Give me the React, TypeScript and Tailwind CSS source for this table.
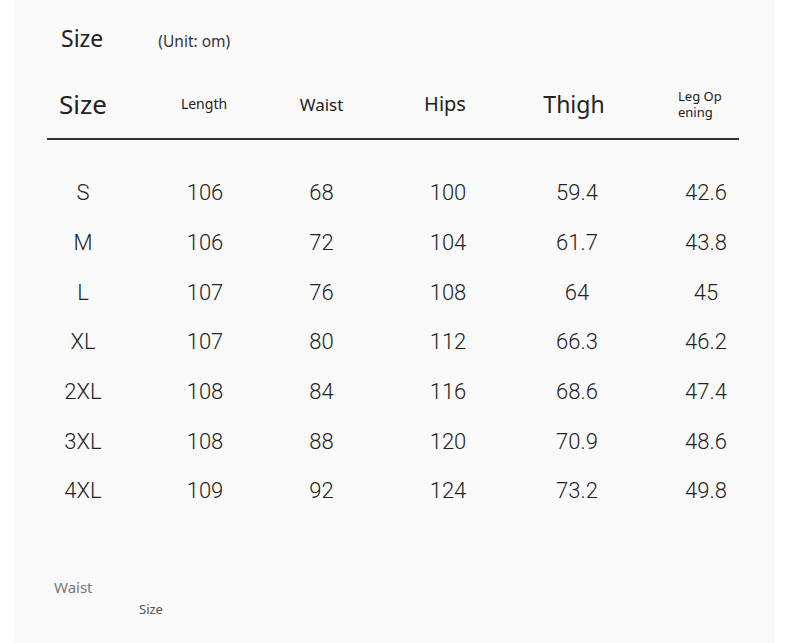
const headers = [
  { label: "Size", cls: "text-[26px]" },
  { label: "Length", cls: "text-[14px]" },
  { label: "Waist", cls: "text-[17px]" },
  { label: "Hips", cls: "text-[20px]" },
  { label: "Thigh", cls: "text-[23px]" },
];

const rows = [
  ["S", "106", "68", "100", "59.4", "42.6"],
  ["M", "106", "72", "104", "61.7", "43.8"],
  ["L", "107", "76", "108", "64", "45"],
  ["XL", "107", "80", "112", "66.3", "46.2"],
  ["2XL", "108", "84", "116", "68.6", "47.4"],
  ["3XL", "108", "88", "120", "70.9", "48.6"],
  ["4XL", "109", "92", "124", "73.2", "49.8"],
];

const grid =
  "grid grid-cols-[120px_122px_113px_134px_124px_134px] items-center text-center";

export default function App() {
  return (
    <div className="w-[790px] h-[643px] bg-white overflow-hidden">
      <div className="ml-[14px] w-[761px] h-[643px] pt-[27px] bg-[#fafafa] font-['Noto_Sans',sans-serif] text-[#222]">
        {/* Title */}
        <div className="flex items-baseline h-[30px] pl-[47px]">
          <span className="text-[23px] leading-none">Size</span>
          <span className="ml-[55px] text-[15.5px] text-[#333] leading-none">
            (Unit: om)
          </span>
        </div>

        {/* Header */}
        <div className={`${grid} h-[56px] mt-[19px] ml-[9px]`}>
          {headers.map((h) => (
            <div key={h.label} className={`${h.cls} leading-none`}>
              {h.label}
            </div>
          ))}
          <div className="flex flex-col text-[13px] leading-[16px] text-left pl-[42px] -mt-[1px]">
            <span>Leg Op</span>
            <span>ening</span>
          </div>
        </div>
        <div className="ml-[33px] w-[692px] h-[2px] bg-[#333] mt-[6px]" />

        {/* Data */}
        <div className="mt-[28px] ml-[9px] font-['Roboto',Arial,sans-serif] font-light text-[22px] text-[#222]">
          {rows.map((r) => (
            <div key={r[0]} className={`${grid} h-[49.7px]`}>
              {r.map((v, i) => (
                <div
                  key={i}
                  className={
                    i === 1 ? "translate-x-[1px]" : i >= 3 ? "translate-x-[3px]" : ""
                  }
                >
                  {v}
                </div>
              ))}
            </div>
          ))}
        </div>

        {/* Footer labels */}
        <div className="mt-[64px] pl-[40px] text-[15px] text-[#777] leading-none">
          Waist
        </div>
        <div className="mt-[8px] pl-[125px] text-[13px] text-[#555] leading-none">
          Size
        </div>
      </div>
    </div>
  );
}
